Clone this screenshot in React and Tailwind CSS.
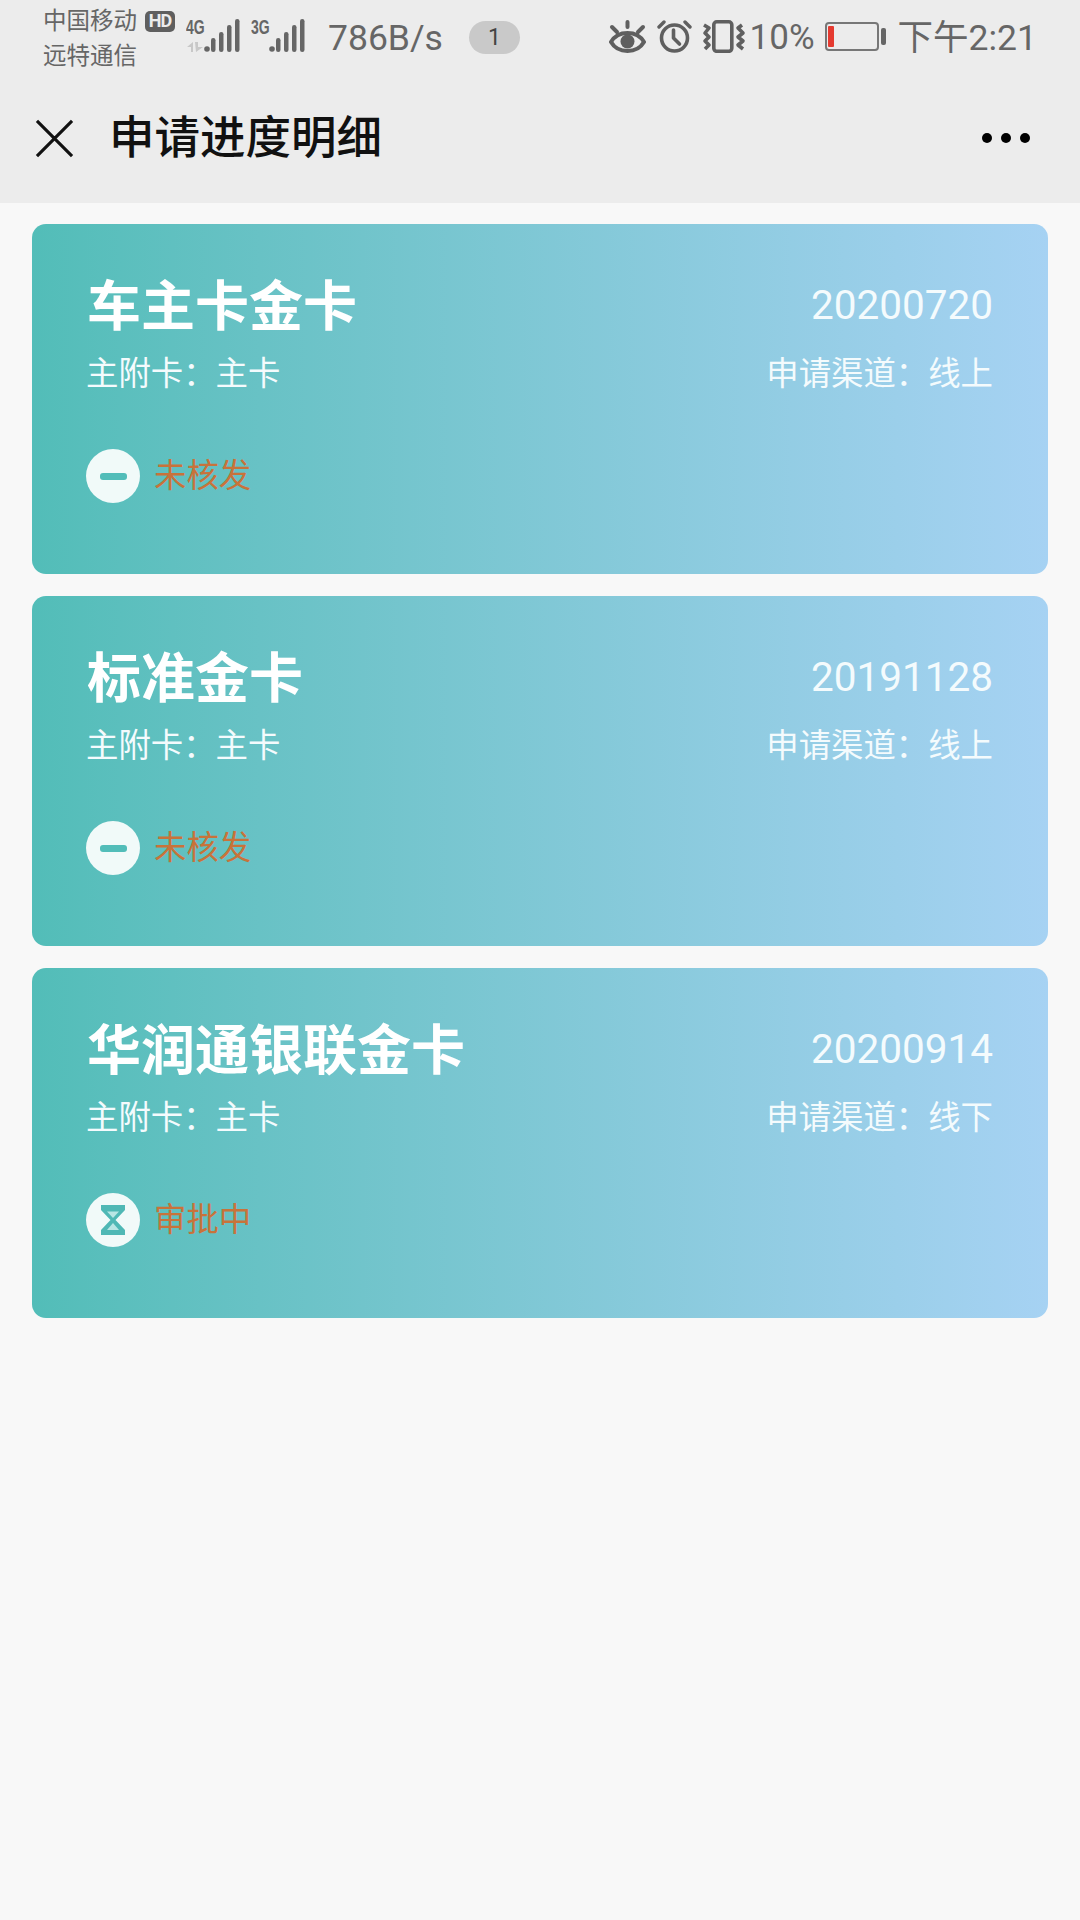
import React from "react";

const cjk = "font-['Roboto','Noto_Sans_CJK_SC',sans-serif]";

const cards = [
  { name: "车主卡金卡", date: "20200720", channel: "线上", status: "未核发", icon: "minus" },
  { name: "标准金卡", date: "20191128", channel: "线上", status: "未核发", icon: "minus" },
  { name: "华润通银联金卡", date: "20200914", channel: "线下", status: "审批中", icon: "hourglass" },
];

const Signal = ({ label, arrows }) => (
  <div className="relative h-[36px] w-[56px] shrink-0">
    <svg width="56" height="36" viewBox="0 0 56 36" className="absolute left-0 top-0" fill="#666">
      <circle cx="23" cy="31" r="2.8" />
      <rect x="27" y="20" width="4.5" height="14" rx="2.2" />
      <rect x="35" y="14" width="4.5" height="20" rx="2.2" />
      <rect x="43" y="7" width="4.5" height="27" rx="2.2" />
      <rect x="51" y="1" width="4.5" height="33" rx="2.2" />
      {arrows && <path d="M3 29 L9 24 V34 H7 V29 Z M11 24 H14 V29 L19 29 L12 34 Z" fill="#c8c8c8" />}
    </svg>
    <span className="absolute left-[2px] top-[-1px] origin-left scale-x-[0.7] font-['Liberation_Sans',sans-serif] text-[20px] font-bold leading-[20px] text-[#666]">
      {label}
    </span>
  </div>
);

const EyeIcon = () => (
  <svg width="37" height="33" viewBox="0 0 37 33" fill="none" stroke="#5f5f5f" strokeWidth="4" strokeLinecap="round">
    <path d="M2 22 C9 10 28 10 35 22 C28 34 9 34 2 22 Z" />
    <circle cx="18.5" cy="21.5" r="7" fill="#5f5f5f" stroke="none" />
    <path d="M18.5 2 V7 M3 7 L8 12 M34 7 L29 12" />
  </svg>
);

const AlarmIcon = () => (
  <svg width="35" height="33" viewBox="0 0 35 33" fill="none" stroke="#5f5f5f" strokeWidth="3.6" strokeLinecap="round" strokeLinejoin="round">
    <circle cx="17.5" cy="18" r="13" />
    <path d="M16.5 10 V18 L22.5 24" />
    <path d="M2 7 L7 2 M33 7 L28 2" strokeWidth="3.4" />
  </svg>
);

const VibrateIcon = () => (
  <svg width="45" height="33" viewBox="0 0 45 33" fill="none" stroke="#5f5f5f" strokeWidth="3.6" strokeLinejoin="round">
    <rect x="11.8" y="1.8" width="18" height="29.5" rx="3" />
    <path d="M2 5 L7 8 L3 13 L7 17 L3 21 L7 25 L3 29" />
    <path d="M40 5 L36 8 L41 13 L36 17 L41 21 L36 25 L41 29" />
  </svg>
);

const BatteryIcon = () => (
  <div className="flex h-[30px] items-center gap-[2px]">
    <div className="flex h-[29px] w-[54px] items-center rounded-[4px] border-2 border-[#777] px-[1px]">
      <div className="h-[21px] w-[6px] rounded-[1px] bg-[#e53a30]" />
    </div>
    <div className="h-[17px] w-[5px] rounded-[2px] bg-[#666]" />
  </div>
);

const StatusBar = () => (
  <div className="flex h-[71px] items-start pl-[43px] pr-[43px] text-[#666]">
    <div className="mt-[7px] flex w-[141px] shrink-0 flex-col">
      <div className="flex items-center">
        <span className="text-[23.5px] leading-[28px]">中国移动</span>
        <span className="ml-[8px] flex h-[21px] w-[30px] items-center justify-center rounded-[5px] bg-[#5f5f5f] text-[18px] font-bold leading-none tracking-[-1px] text-[#ececec]">
          HD
        </span>
      </div>
      <span className="mt-[7px] text-[23.5px] leading-[28px]">远特通信</span>
    </div>
    <div className="mt-[18px] flex gap-[9px]">
      <Signal label="4G" arrows />
      <Signal label="3G" />
    </div>
    <span className="ml-[23px] mt-[18px] text-[35.5px] leading-[40px]">786B/s</span>
    <span className="ml-[26px] mt-[21px] flex h-[33px] w-[51px] items-center justify-center rounded-full bg-[#c9c9c9] text-[23px] leading-none text-[#444]">
      1
    </span>
    <div className="ml-auto mt-[18px] flex h-[36px] items-center">
      <EyeIcon />
      <div className="ml-[11px]"><AlarmIcon /></div>
      <div className="ml-[10px]"><VibrateIcon /></div>
      <span className="ml-[3px] mt-[4px] text-[35px] leading-[36px]">10%</span>
      <div className="ml-[10px]"><BatteryIcon /></div>
      <span className="ml-[12px] mt-[4px] text-[35.5px] leading-[36px]">下午2:21</span>
    </div>
  </div>
);

const NavBar = () => (
  <div className="flex h-[132px] items-center pl-[35px] pr-[50px] pt-[2px]">
    <svg width="39" height="39" viewBox="0 0 40 40" stroke="#111" strokeWidth="3.2" fill="none">
      <path d="M2 2 L38 38 M38 2 L2 38" />
    </svg>
    <h1 className="ml-[35px] mt-[2px] text-[45.5px] font-medium leading-[50px] text-[#111]">申请进度明细</h1>
    <div className="ml-auto flex gap-[9px]">
      <span className="h-[10px] w-[10px] rounded-full bg-black" />
      <span className="h-[10px] w-[10px] rounded-full bg-black" />
      <span className="h-[10px] w-[10px] rounded-full bg-black" />
    </div>
  </div>
);

const StatusIcon = ({ type }) => (
  <div className="flex h-[54px] w-[54px] shrink-0 items-center justify-center rounded-full bg-[#f1faf9]">
    {type === "minus" ? (
      <div className="h-[7px] w-[27px] rounded-[3px] bg-[#52bdb9]" />
    ) : (
      <svg width="24" height="30" viewBox="0 0 24 30">
        <path d="M0 0 H24 V5 L14.5 15 L24 25 V30 H0 V25 L9.5 15 L0 5 Z" fill="#4fb8b5" />
        <path d="M6 6.5 H18 L12 13 Z" fill="#b8e6e4" />
        <path d="M12 18 L18 25 H6 Z" fill="#b8e6e4" />
      </svg>
    )}
  </div>
);

const Card = ({ card }) => (
  <div className="flex h-[350px] flex-col rounded-[14px] bg-gradient-to-r from-[#52bdb8] to-[#a6d2f3] pl-[55px] pr-[55px] pt-[52px] text-white">
    <div className="flex items-center justify-between">
      <h2 className="text-[54px] font-bold leading-[64px]">{card.name}</h2>
      <span className="mb-[6px] text-[40.5px] leading-[58px] text-[#f4fbfd]">{card.date}</span>
    </div>
    <div className="ml-[-1px] mt-[14px] flex items-center justify-between text-[32.4px] leading-[40px] text-[#f4fbfd]">
      <span>主附卡：主卡</span>
      <span>申请渠道：{card.channel}</span>
    </div>
    <div className="ml-[-1px] mt-[55px] flex items-center">
      <StatusIcon type={card.icon} />
      <span className="ml-[14px] text-[32.4px] leading-[40px] text-[#c8733a]">{card.status}</span>
    </div>
  </div>
);

export default function App() {
  return (
    <div className={`flex min-h-[1920px] w-[1080px] flex-col bg-[#f8f8f8] ${cjk}`}>
      <div className="h-[203px] bg-[#ececec]">
        <StatusBar />
        <NavBar />
      </div>
      <div className="flex flex-col gap-[22px] px-[32px] pt-[21px]">
        {cards.map((card) => (
          <Card key={card.date} card={card} />
        ))}
      </div>
    </div>
  );
}
